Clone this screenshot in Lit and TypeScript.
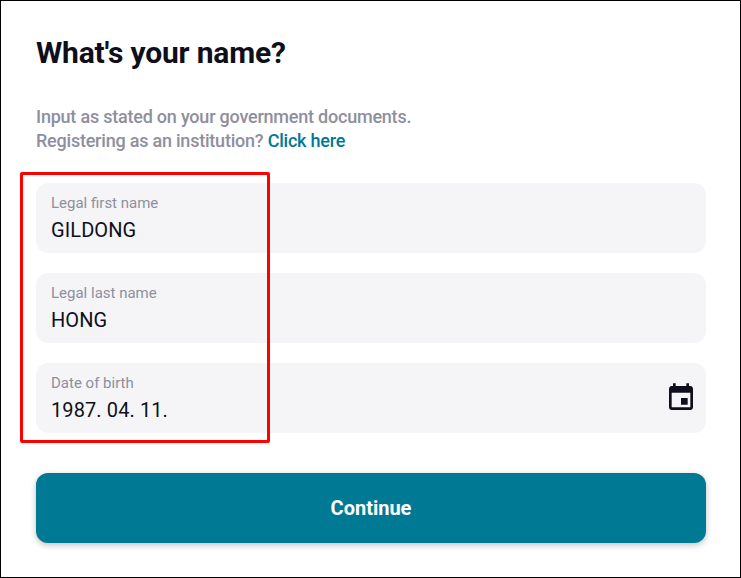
import { LitElement, html, css, svg } from "lit";
import { customElement } from "lit/decorators.js";

@customElement("app-root")
export class AppRoot extends LitElement {
  static styles = css`
    :host {
      display: block;
      width: 741px;
      height: 578px;
      box-sizing: border-box;
      font-family: Roboto, "Liberation Sans", sans-serif;
      background: #fff;
    }
    .frame {
      position: relative;
      box-sizing: border-box;
      width: 741px;
      height: 578px;
      border: 1px solid #000;
      padding: 0 34px 0 35px;
      display: flex;
      flex-direction: column;
    }
    h1 {
      margin: 32px 0 0;
      font-size: 30px;
      line-height: 40px;
      font-weight: 700;
      letter-spacing: -0.17px;
      color: #0e0f1a;
    }
    .sub {
      margin: 31.5px 0 0;
      padding-bottom: 0.5px;
      font-size: 18px;
      line-height: 24.5px;
      font-weight: 470;
      letter-spacing: -0.22px;
      color: #8e8f9e;
    }
    .sub a {
      color: #007994;
      text-decoration: none;
    }
    .fields {
      margin-top: 29px;
      display: flex;
      flex-direction: column;
      gap: 20px;
    }
    .field {
      height: 70px;
      box-sizing: border-box;
      background: #f5f5f7;
      border-radius: 12px;
      padding: 11px 9px 0 15px;
      display: flex;
      align-items: flex-start;
      justify-content: space-between;
    }
    .label {
      font-size: 15px;
      line-height: 18px;
      color: #8e8f9e;
    }
    .value {
      margin-top: 5px;
      font-size: 20px;
      line-height: 26px;
      font-weight: 440;
      letter-spacing: 0.1px;
      color: #0e0f1a;
    }
    .icon {
      width: 32px;
      height: 32px;
      margin-top: 8px;
      fill: #0e0f1a;
    }
    button {
      margin-top: 40px;
      height: 70px;
      border: none;
      border-radius: 12px;
      background: #007994;
      color: #fff;
      font: 700 20px Roboto, "Liberation Sans", sans-serif;
      box-shadow: 0 2px 6px rgba(0, 0, 0, 0.25);
    }
    .highlight {
      position: absolute;
      left: 19px;
      top: 171px;
      width: 250px;
      height: 271px;
      box-sizing: border-box;
      border: 3px solid #ff0000;
      border-radius: 2px;
      pointer-events: none;
    }
  `;

  private field(label: string, value: string, icon = false) {
    return html`<div class="field">
      <div>
        <div class="label">${label}</div>
        <div class="value">${value}</div>
      </div>
      ${icon
        ? html`<svg class="icon" viewBox="0 0 24 24">
            ${svg`<path d="M17 12h-5v5h5v-5zM16 1v2H8V1H6v2H5c-1.11 0-1.99.9-1.99 2L3 19c0 1.1.89 2 2 2h14c1.1 0 2-.9 2-2V5c0-1.1-.9-2-2-2h-1V1h-2zm3 18H5V8h14v11z"/>`}
          </svg>`
        : ""}
    </div>`;
  }

  render() {
    return html`<div class="frame">
      <h1>What's your name?</h1>
      <p class="sub">
        Input as stated on your government documents.<br />
        Registering as an institution? <a href="#">Click here</a>
      </p>
      <div class="fields">
        ${this.field("Legal first name", "GILDONG")}
        ${this.field("Legal last name", "HONG")}
        ${this.field("Date of birth", "1987. 04. 11.", true)}
      </div>
      <button>Continue</button>
      <div class="highlight"></div>
    </div>`;
  }
}
